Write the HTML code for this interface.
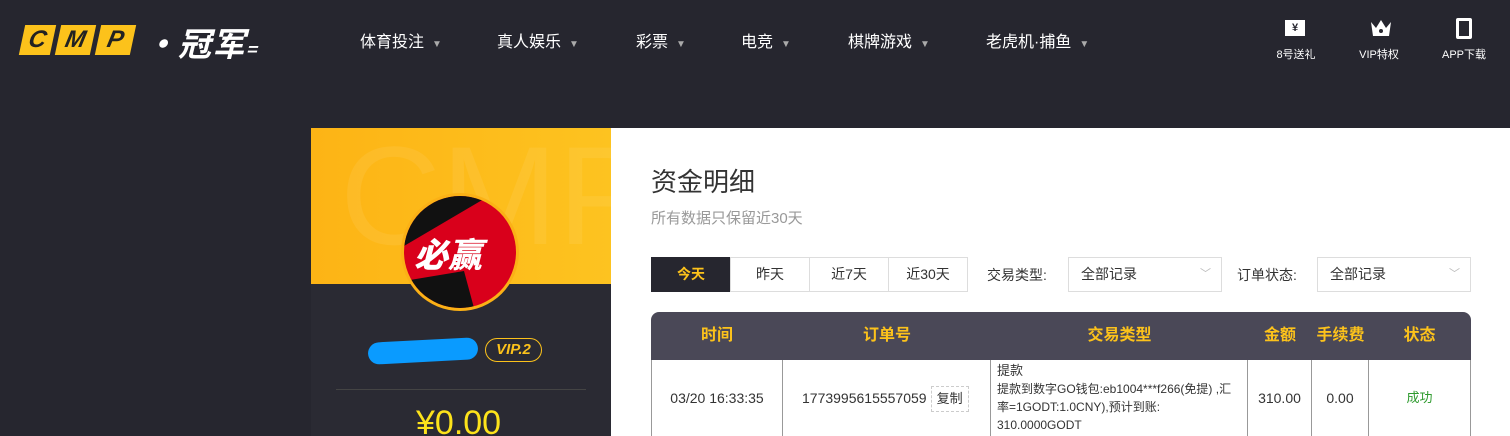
<!DOCTYPE html>
<html><head><meta charset="utf-8"><style>
*{margin:0;padding:0;box-sizing:border-box}
html,body{width:1510px;height:436px;overflow:hidden}
body{background:#26262f;font-family:"Liberation Sans","Noto Sans CJK SC",sans-serif;position:relative}
.a{position:absolute}
.nav{color:#fff;font-size:16px;top:28px}
.nav span{font-size:10px;color:#aaa;margin-left:8px}
.ic{color:#fff;font-size:11px;text-align:center;top:46px;width:80px}
.cm{top:25px;height:30px;background:#fcc21b;transform:skewX(-12deg);color:#222;font:italic 900 24px "Liberation Sans",sans-serif;text-align:center;line-height:30px}
.tab{top:257px;height:35px;width:80px;border:1px solid #ddd;font-size:14px;text-align:center;line-height:33px;color:#333;background:#fff}
.sel{top:257px;height:35px;width:154px;border:1px solid #ddd;font-size:14px;line-height:33px;padding-left:12px;color:#333}
.sel i{position:absolute;right:10px;top:0;color:#bbb;font-style:normal;font-size:11px}
.th{top:312px;height:48px;line-height:48px;text-align:center;color:#fcc21b;font-weight:bold;font-size:16px}
.td{top:360px;height:76px;border-right:1px solid #999;font-size:14px;color:#333;text-align:center;line-height:76px}
</style></head><body>
<div class="a cm" style="left:22px;width:31px">C</div>
<div class="a cm" style="left:58px;width:35px">M</div>
<div class="a cm" style="left:98px;width:35px">P</div>
<div class="a" style="left:144px;top:18px;color:#fff;font:italic bold 33px 'Noto Sans CJK SC',sans-serif;letter-spacing:1px">·冠军<span style="font-size:18px">=</span></div>
<div class="a nav" style="left:360px">体育投注<span>▼</span></div>
<div class="a nav" style="left:497px">真人娱乐<span>▼</span></div>
<div class="a nav" style="left:636px">彩票<span>▼</span></div>
<div class="a nav" style="left:741px">电竞<span>▼</span></div>
<div class="a nav" style="left:848px">棋牌游戏<span>▼</span></div>
<div class="a nav" style="left:986px">老虎机·捕鱼<span>▼</span></div>
<div class="a" style="left:1285px;top:20px;width:20px;height:16px;background:#fff;color:#26262f;font-size:11px;text-align:center;line-height:16px;font-weight:bold">¥</div>
<div class="a" style="left:1369px;top:18px;width:24px;height:20px"><svg width="24" height="20"><path d="M2 4L7 10L12 2L17 10L22 4L20 18H4Z" fill="#fff"/><circle cx="12" cy="13" r="2" fill="#26262f"/></svg></div>
<div class="a" style="left:1456px;top:18px;width:16px;height:21px;border:3px solid #fff;border-radius:2px"></div>
<div class="a ic" style="left:1256px">8号送礼</div>
<div class="a ic" style="left:1339px">VIP特权</div>
<div class="a ic" style="left:1424px">APP下载</div>

<div class="a" style="left:311px;top:128px;width:300px;height:156px;background:linear-gradient(90deg,#fdb415,#fdc320);overflow:hidden"><div class="a" style="left:29px;top:-13px;font:140px 'Liberation Sans',sans-serif;color:rgba(255,255,255,0.07)">CMP</div></div>
<div class="a" style="left:311px;top:284px;width:300px;height:152px;background:#2a2a33"></div>
<div class="a" style="left:401px;top:193px;width:118px;height:118px;border-radius:50%;background:#fbb116"></div>
<div class="a" style="left:404px;top:196px;width:112px;height:112px;border-radius:50%;overflow:hidden;background:#d9001b">
<svg width="112" height="112" class="a"><path d="M0 0H85L0 50Z" fill="#111"/><path d="M0 85L60 75L70 112H0Z" fill="#111"/></svg>
<div class="a" style="left:10px;top:32px;color:#fff;font:italic 900 34px 'Noto Sans CJK SC',sans-serif">必赢</div></div>
<div class="a" style="left:368px;top:340px;width:110px;height:22px;border-radius:11px;background:#0a9bff;transform:rotate(-3deg)"></div>
<div class="a" style="left:485px;top:338px;width:57px;height:24px;border:1px solid #fcc21b;border-radius:12px;color:#fcc21b;font:italic bold 15px 'Liberation Sans',sans-serif;text-align:center;line-height:22px">VIP.2</div>
<div class="a" style="left:336px;top:389px;width:250px;height:1px;background:#444"></div>
<div class="a" style="left:416px;top:404px;color:#fde31b;font-size:34px">¥0.00</div>

<div class="a" style="left:611px;top:128px;width:899px;height:308px;background:#fff"></div>
<div class="a" style="left:651px;top:162px;font-size:26px;color:#333">资金明细</div>
<div class="a" style="left:651px;top:207px;font-size:15px;color:#999">所有数据只保留近30天</div>
<div class="a tab" style="left:651px;background:#26262f;color:#fcc21b;border-color:#26262f;font-weight:bold">今天</div>
<div class="a tab" style="left:730px">昨天</div>
<div class="a tab" style="left:809px">近7天</div>
<div class="a tab" style="left:888px">近30天</div>
<div class="a" style="left:987px;top:265px;font-size:14px;color:#333">交易类型:</div>
<div class="a sel" style="left:1068px">全部记录<i>﹀</i></div>
<div class="a" style="left:1237px;top:265px;font-size:14px;color:#333">订单状态:</div>
<div class="a sel" style="left:1317px">全部记录<i>﹀</i></div>

<div class="a" style="left:651px;top:312px;width:820px;height:48px;background:#4a4857;border-radius:8px 8px 0 0"></div>
<div class="a th" style="left:651px;width:132px">时间</div>
<div class="a th" style="left:783px;width:208px">订单号</div>
<div class="a th" style="left:991px;width:257px">交易类型</div>
<div class="a th" style="left:1248px;width:64px">金额</div>
<div class="a th" style="left:1312px;width:57px">手续费</div>
<div class="a th" style="left:1369px;width:101px">状态</div>
<div class="a" style="left:651px;top:360px;width:820px;height:76px;border-left:1px solid #999"></div>
<div class="a td" style="left:652px;width:131px">03/20 16:33:35</div>
<div class="a td" style="left:783px;width:208px;text-align:left;padding-left:19px">1773995615557059<span style="display:inline-block;margin-left:4px;border:1px dashed #ccc;line-height:24px;padding:0 5px;font-size:13px">复制</span></div>
<div class="a td" style="left:991px;width:257px;text-align:left;line-height:18px;padding:2px 6px;font-size:12px"><span style="font-size:13px">提款</span><br>提款到数字GO钱包:eb1004***f266(免提) ,汇率=1GODT:1.0CNY),预计到账:<br>310.0000GODT</div>
<div class="a td" style="left:1248px;width:64px">310.00</div>
<div class="a td" style="left:1312px;width:57px">0.00</div>
<div class="a td" style="left:1369px;width:102px;color:#2e9a2e;font-size:13px">成功</div>
</body></html>
